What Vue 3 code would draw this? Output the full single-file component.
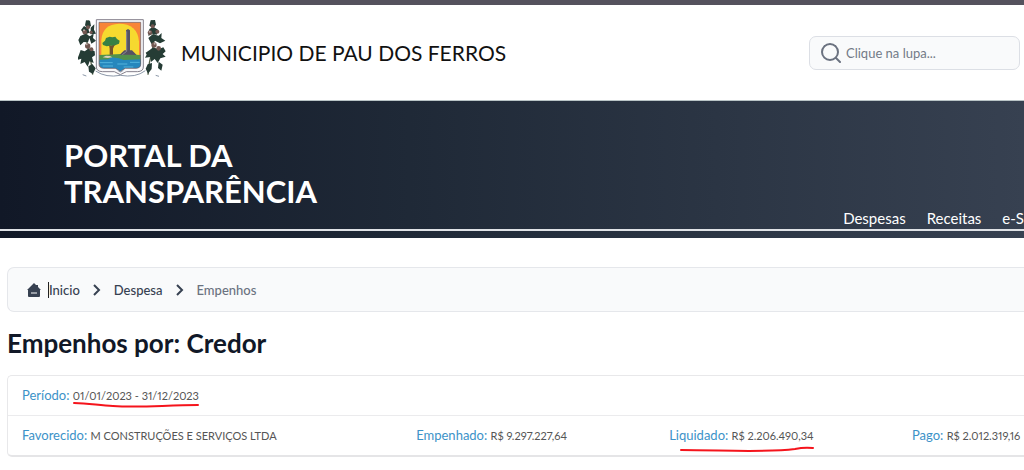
<script setup>
import { ref } from 'vue'

const search = ref('')
const menu = ['Despesas', 'Receitas', 'e-S']
const totals = [
  { label: 'Empenhado:', value: 'R$ 9.297.227,64' },
  { label: 'Liquidado:', value: 'R$ 2.206.490,34', marked: true },
  { label: 'Pago:', value: 'R$ 2.012.319,16' }
]
</script>

<template>
  <div class="page">
    <header class="top">
      <a class="brand" href="#">
        <svg class="crest" viewBox="24 21 270 180" role="img" aria-label="Brasão do município">
          <g fill="none" stroke="#56634a" stroke-width="4">
            <path d="M55 31Q45 82 55 120T68 194" />
            <path d="M245 31Q258 82 247 120T234 194" />
          </g>
          <g fill="#253c35">
            <path d="M48 31l12 1 3 16-10 7-8-9zM42 48l13 7 3 14-16 2-9-11zM62 53l11-10-1 16 6 12-16 2zM31 78l15-7 14 8-6 18-13-1-10 10-6-16zM57 80l14-9-2 13 9 8-14 9zM27 134l5-14 12 4 13-9 17 9 1 12-9 6 5 17-12-5-6 16-9-14-13 6 3-16-13 4zM55 169l12-7 10 13-8 17-12-7z" />
            <path d="M242 31l13-1 3 14-9 10-11-7zM238 57l12-7 15 10-5 14-13-3-12 7zM235 84l13-11 18 4 9-8-1 15 12 8-16 8-15-8-10 11zM227 128l12-8 11-8 15 6 15-6 7 12-9 8 9 8-16 5-8 14-9-12-11 9-2-15-16 2 5-9zM233 163l13-4-1 18-11 14-7-15zM266 155l12 9-4 18-10-8z" />
          </g>
          <g fill="#715650">
            <circle cx="54" cy="52" r="6" /><circle cx="44" cy="66" r="7" /><circle cx="63" cy="67" r="5" />
            <circle cx="53" cy="108" r="8" /><circle cx="64" cy="118" r="6" />
            <circle cx="248" cy="49" r="6" /><circle cx="240" cy="68" r="7" /><circle cx="262" cy="65" r="6" />
            <circle cx="252" cy="105" r="8" /><circle cx="266" cy="115" r="7" />
          </g>
          <g fill="#b7a7a2">
            <circle cx="42" cy="61" r="3" /><circle cx="50" cy="103" r="3" /><circle cx="254" cy="101" r="3" /><circle cx="239" cy="65" r="3" />
          </g>
          <path d="M79 29h141v142q0 13-17 14h-34l-18 9-18-9H97q-18-1-18-14z" fill="#f8f8fa" stroke="#85818c" stroke-width="3" />
          <path d="M87 37h125v126q0 11-14 12h-32l-15 9-15-9h-35q-14-1-14-12z" fill="#f88438" />
          <path d="M94 136V89q4-46 53-48 55 0 60 53v42z" fill="#f6d92f" />
          <path d="M88 135l66-3 58 3v28H88z" fill="#51904c" />
          <path d="M88 149l27-1 10-6 22 3 14 5 51-2v16q0 10-14 11h-32l-15 9-15-9h-34q-14-1-14-12z" fill="#2687bd" />
          <path d="M89 158h39m14 4h30m8-5h29M98 168h31m32 3h29" stroke="#54b4dc" stroke-width="3" />
          <path d="M87 37h125v126q0 11-14 12h-32l-15 9-15-9h-35q-14-1-14-12z" fill="none" stroke="#625e70" stroke-width="2" />
          <path d="M97 99l8-7 3-8 11-4 8 2 9-2 5 7 8 5-2 9-8 3-8 4-11-1-10 2-11-4z" fill="#398044" />
          <path d="M117 105l7 3 10-4-5 12v18h-10v-18z" fill="#73542f" />
          <path d="M98 142l10-5 12 1 7 4-14 2z" fill="#ddd0b7" />
          <path d="M168 61l6-4 6 4v62h-12zM149 134l14-13h23l14 14z" fill="#555262" />
          <path d="M170 64v60l-13 10" stroke="#8b8695" stroke-width="3" fill="none" />
          <path d="M77 183q31 21 74 13 46 8 75-14M143 181l8 5 9-5M38 194l11 4m208-2 10 3" fill="none" stroke="#8c98a9" stroke-width="3" />
        </svg>
        <span class="city">MUNICIPIO DE PAU DOS FERROS</span>
      </a>
      <label class="search">
        <svg class="lens" viewBox="0 0 20 20" aria-hidden="true">
          <circle cx="9" cy="9" r="8" />
          <path d="M15 15l4 4" />
        </svg>
        <input v-model="search" type="text" placeholder="Clique na lupa..." aria-label="Pesquisar" />
      </label>
    </header>

    <section class="hero">
      <h1>PORTAL DA<br />TRANSPARÊNCIA</h1>
      <nav class="menu" aria-label="Principal">
        <a v-for="item in menu" :key="item" href="#">{{ item }}</a>
      </nav>
    </section>

    <main class="content">
      <nav class="crumbs" aria-label="Navegação">
        <a class="home" href="#">
          <svg class="house" viewBox="0 0 14 14" aria-hidden="true">
            <path d="M7 0L0 7h1v6q0 1 1 1h10q1 0 1-1V7h1L11 4V2H9z" />
            <path class="door" d="M4 10h6" />
          </svg>
          <span class="caret">Inicio</span>
        </a>
        <svg class="chevron" viewBox="0 0 8 12" aria-hidden="true"><path d="M1 1l5 5-5 5" /></svg>
        <a href="#">Despesa</a>
        <svg class="chevron" viewBox="0 0 8 12" aria-hidden="true"><path d="M1 1l5 5-5 5" /></svg>
        <span class="current">Empenhos</span>
      </nav>

      <h2>Empenhos por: Credor</h2>

      <div class="panel">
        <table>
          <colgroup>
            <col class="wide" /><col class="mid" /><col class="slim" /><col />
          </colgroup>
          <tbody>
            <tr>
              <td colspan="4">
                <span class="label">Período:</span>&nbsp;<span class="value marked">01/01/2023 - 31/12/2023
                  <svg class="stroke near" viewBox="0 0 126 8" preserveAspectRatio="none" aria-hidden="true">
                    <path d="M1 2C17 2 27 5 40 5C68 7 92 4 125 4" />
                  </svg>
                </span>
              </td>
            </tr>
            <tr>
              <td>
                <span class="label">Favorecido:</span>&nbsp;<span class="value">M CONSTRUÇÕES E SERVIÇOS LTDA</span>
              </td>
              <td v-for="item in totals" :key="item.label">
                <span :class="{ marked: item.marked }">
                  <span class="label">{{ item.label }}</span>&nbsp;<span class="value">{{ item.value }}</span>
                  <svg v-if="item.marked" class="stroke far" viewBox="0 0 134 8" preserveAspectRatio="none" aria-hidden="true">
                    <path d="M1 4C42 4 84 7 115 3Q124 1 133 2" />
                  </svg>
                </span>
              </td>
            </tr>
          </tbody>
        </table>
      </div>
    </main>
  </div>
</template>

<style>
body {
  margin: 0;
  background: #fff;
}
</style>

<style scoped>
.page {
  font-family: Lato, "Open Sans", sans-serif;
  color: #374151;
  border-top: 5px solid #55525d;
  overflow: hidden;
}
a {
  color: inherit;
  text-decoration: none;
}
.top {
  display: flex;
  justify-content: space-between;
  align-items: flex-start;
  height: 95px;
  border-bottom: 1px solid #b9c4c6;
  padding: 0 4px 0 78px;
}
.brand {
  display: flex;
  align-items: flex-start;
  gap: 13px;
  color: #111;
}
.crest {
  width: 90px;
  height: 60px;
  margin-top: 12px;
}
.city {
  font-size: 21px;
  line-height: 32px;
  margin-top: 32px;
  white-space: nowrap;
}
.search {
  display: flex;
  align-items: center;
  box-sizing: border-box;
  width: 211px;
  height: 34px;
  margin-top: 31px;
  padding: 0 11px;
  gap: 5px;
  background: #f9fafb;
  border: 1px solid #dcdfe5;
  border-radius: 7px;
}
.lens {
  flex: none;
  width: 20px;
  height: 20px;
  fill: none;
  stroke: #6b7280;
  stroke-width: 2;
  stroke-linecap: round;
}
.search input {
  flex: 1;
  min-width: 0;
  border: 0;
  padding: 0;
  outline: 0;
  background: transparent;
  font: 13px/20px Lato, "Open Sans", sans-serif;
  color: #374151;
}
.search input::placeholder {
  color: #737a87;
  opacity: 1;
}
.hero {
  background: linear-gradient(90deg, #111827, #1f2937 40%, #374151);
  color: #fff;
  padding: 36px 0 7px;
}
.hero h1 {
  margin: 0;
  padding-left: 64px;
  font-size: 31px;
  line-height: 36px;
  font-weight: 700;
}
.menu {
  display: flex;
  justify-content: flex-end;
  gap: 21px;
  padding-bottom: 2px;
  border-bottom: 2px solid #dfe2e6;
  font-size: 15px;
  line-height: 18px;
  white-space: nowrap;
}
.content {
  padding: 29px 0 13px 7px;
}
.crumbs {
  display: flex;
  align-items: center;
  gap: 13px;
  height: 43px;
  padding-left: 19px;
  background: #f9fafb;
  border: 1px solid #e5e7eb;
  border-right: 0;
  border-radius: 7px 0 0 7px;
  font-size: 13px;
  font-weight: 500;
}
.home {
  display: flex;
  align-items: center;
  gap: 8px;
}
.house {
  width: 14px;
  height: 14px;
  fill: #374151;
}
.door {
  stroke: #f9fafb;
  stroke-width: 1;
}
.caret {
  box-shadow: -1px 0 #222;
}
.chevron {
  width: 8px;
  height: 12px;
  fill: none;
  stroke: #374151;
  stroke-width: 2;
}
.current {
  color: #6b7280;
}
h2 {
  margin: 15px 0 16px;
  font-size: 26px;
  line-height: 32px;
  font-weight: 700;
  color: #111827;
}
.panel {
  border: 1px solid #e8e8ea;
  border-right: 0;
  border-bottom: 2px solid #e5e5e7;
  border-radius: 5px 0 0 5px;
}
table {
  width: 100%;
  table-layout: fixed;
  border-collapse: collapse;
}
.wide {
  width: 38.8%;
}
.mid {
  width: 24.9%;
}
.slim {
  width: 23.9%;
}
td {
  height: 39px;
  padding: 0 0 0 14px;
  font-size: 13px;
  line-height: 20px;
  white-space: nowrap;
}
tr + tr td {
  border-top: 1px solid #ebebed;
}
.label {
  color: #3c92c8;
}
.value {
  font-size: 11px;
  font-variant-numeric: proportional-nums;
  color: #555;
}
.marked {
  position: relative;
}
.stroke {
  position: absolute;
  height: 8px;
  fill: none;
  stroke: #f5141c;
  stroke-width: 2;
  stroke-linecap: round;
}
.near {
  left: 0;
  top: 12px;
  width: 126px;
}
.far {
  left: 11px;
  top: 19px;
  width: 134px;
}
</style>
